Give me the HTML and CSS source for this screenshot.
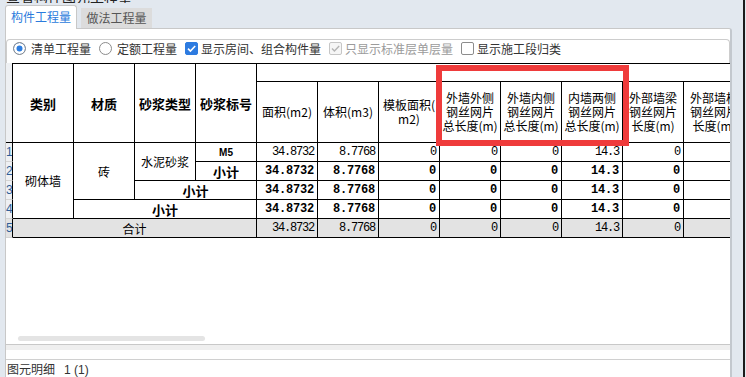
FILE: index.html
```html
<!DOCTYPE html>
<html lang="zh-CN">
<head>
    <meta charset="UTF-8">
    <meta name="viewport" content="width=device-width, initial-scale=1.0">
    <title>查看工程量</title>

    <link rel="stylesheet" href="styles.css">

</head>
<body>

    <div class="app">
        <div class="main">
            <div class="title"><span>查看构件图元工程量</span></div>

            <div class="tabs">
                <div class="tab active">构件工程量</div>
                <div class="tab">做法工程量</div>
            </div>

            <div class="panel">
                <div class="options">
                    <label class="opt"><span class="radio on"></span>清单工程量</label>
                    <label class="opt"><span class="radio"></span>定额工程量</label>
                    <label class="opt">
                        <span class="check on">
                            <svg width="11" height="11" viewBox="0 0 11 11"><path d="M2 5.6l2.4 2.4L9.2 3" fill="none" stroke="#fff" stroke-width="1.6"/></svg>
                        </span>显示房间、组合构件量
                    </label>
                    <label class="opt dim">
                        <span class="check off">
                            <svg width="11" height="11" viewBox="0 0 11 11"><path d="M2 5.6l2.4 2.4L9.2 3" fill="none" stroke="#b4b4b4" stroke-width="1.4"/></svg>
                        </span>只显示标准层单层量
                    </label>
                    <label class="opt"><span class="check"></span>显示施工段归类</label>
                </div>

                <div class="sheet">
                    <div class="grid">
                        <!-- header -->
                        <div class="rn hd-rn r2"></div>
                        <div class="hd big r2">类别</div>
                        <div class="hd big r2">材质</div>
                        <div class="hd big r2">砂浆类型</div>
                        <div class="hd big r2">砂浆标号</div>
                        <div class="hd c8"></div>

                        <div class="sub">面积(m2)</div>
                        <div class="sub">体积(m3)</div>
                        <div class="sub">模板面积(<br>m2)</div>
                        <div class="sub">外墙外侧<br>钢丝网片<br>总长度(m)</div>
                        <div class="sub">外墙内侧<br>钢丝网片<br>总长度(m)</div>
                        <div class="sub">内墙两侧<br>钢丝网片<br>总长度(m)</div>
                        <div class="sub">外部墙梁<br>钢丝网片<br>长度(m)</div>
                        <div class="sub">外部墙柱<br>钢丝网片<br>长度(m)</div>

                        <!-- row 1 -->
                        <div class="rn">1</div>
                        <div class="r4">砌体墙</div>
                        <div class="r3">砖</div>
                        <div class="r2">水泥砂浆</div>
                        <div class="grade">M5</div>
                        <div class="num">34.8732</div>
                        <div class="num">8.7768</div>
                        <div class="num">0</div>
                        <div class="num">0</div>
                        <div class="num">0</div>
                        <div class="num">14.3</div>
                        <div class="num">0</div>
                        <div class="num"></div>

                        <!-- row 2 -->
                        <div class="rn">2</div>
                        <div class="total">小计</div>
                        <div class="num bold">34.8732</div>
                        <div class="num bold">8.7768</div>
                        <div class="num bold">0</div>
                        <div class="num bold">0</div>
                        <div class="num bold">0</div>
                        <div class="num bold">14.3</div>
                        <div class="num bold">0</div>
                        <div class="num bold"></div>

                        <!-- row 3 -->
                        <div class="rn">3</div>
                        <div class="total c2">小计</div>
                        <div class="num bold">34.8732</div>
                        <div class="num bold">8.7768</div>
                        <div class="num bold">0</div>
                        <div class="num bold">0</div>
                        <div class="num bold">0</div>
                        <div class="num bold">14.3</div>
                        <div class="num bold">0</div>
                        <div class="num bold"></div>

                        <!-- row 4 -->
                        <div class="rn">4</div>
                        <div class="total c3">小计</div>
                        <div class="num bold">34.8732</div>
                        <div class="num bold">8.7768</div>
                        <div class="num bold">0</div>
                        <div class="num bold">0</div>
                        <div class="num bold">0</div>
                        <div class="num bold">14.3</div>
                        <div class="num bold">0</div>
                        <div class="num bold"></div>

                        <!-- row 5 -->
                        <div class="rn sum">5</div>
                        <div class="c4 sum">合计</div>
                        <div class="num sum">34.8732</div>
                        <div class="num sum">8.7768</div>
                        <div class="num sum">0</div>
                        <div class="num sum">0</div>
                        <div class="num sum">0</div>
                        <div class="num sum">14.3</div>
                        <div class="num sum">0</div>
                        <div class="num sum"></div>
                    </div>

                    <div class="mark"></div>
                    <div class="thumb"></div>
                </div>

                <div class="splitter"></div>
                <div class="detail">图元明细<span class="count">1 (1)</span></div>
            </div>
        </div>
        <div class="edge"></div>
    </div>

</body>
</html>
```

FILE: styles.css
```css
*{
    margin: 0;padding: 0
}

body{
    background: #e2e8ef;
    font-family: "Noto Sans CJK SC", sans-serif;
    font-size: 12px;
    color: #333;
}

.app{
    display: flex;
    height: 377px;
    overflow: hidden;
}

.main{
    width: 743px;
    flex: none;
}

.edge{
    width: 2px;
    background: #1b1b1b;
}

/* cut off window title */
.title{
    height: 3px;
    overflow: hidden;
    padding-left: 6px;
}

.title span{
    display: block;
    font-size: 14px;
    line-height: 16px;
    margin-top: -12px;
    color: #222;
}

.tabs{
    display: flex;
    align-items: flex-end;
    height: 23px;
    margin-top: 2px;
    padding-left: 5px;
}

.tab{
    width: 71px;
    height: 20px;
    line-height: 20px;
    text-align: center;
    background: #dcdcdc;
    color: #555;
    margin-left: 4px;
}

.tab.active{
    width: 72px;
    height: 24px;
    line-height: 22px;
    box-sizing: border-box;
    background: #fff;
    color: #2b7bdc;
    border: 1px solid #c8c8c8;
    border-bottom: none;
    border-radius: 3px 3px 0 0;
    margin: 0 0 -1px 0;
    position: relative;
    z-index: 1;
}

.panel{
    margin-left: 5px;
    width: 727px;
    height: 349px;
    box-sizing: border-box;
    background: #fff;
    border: 1px solid #c8c8c8;
    border-right: 2px solid #c3c8ce;
    border-bottom: none;
    border-radius: 0 3px 0 0;
}

.options{
    margin-top: 10px;
    height: 24px;
    box-sizing: border-box;
    border: 1px solid #cdcdcd;
    border-bottom: none;
    border-radius: 4px 4px 0 0;
    display: flex;
    align-items: center;
    padding: 0 0 6px 6px;
}

.opt{
    display: flex;
    align-items: center;
    margin-right: 8px;
    white-space: nowrap;
}

.opt.dim{
    color: #9b9b9b;
}

.radio{
    width: 13px;height: 13px;
    box-sizing: border-box;
    border: 1px solid #8c8c8c;
    border-radius: 50%;
    margin-right: 5px;
}

.radio.on{
    background: #2e7ee0;
    box-shadow: inset 0 0 0 2.5px #fff;
}

.check{
    width: 13px;height: 13px;
    box-sizing: border-box;
    border: 1px solid #8c8c8c;
    border-radius: 2px;
    margin-right: 3px;
    display: flex;
    align-items: center;
    justify-content: center;
}

.check.on{
    background: #2d7be0;
    border-color: #2d7be0;
}

.check.off{
    background: #f6f6f6;
    border-color: #c6c6c6;
}

/* quantity sheet */
.sheet{
    position: relative;
    height: 281px;
    display: flex;
    flex-direction: column;
    overflow: hidden;
}

.grid{
    display: grid;
    grid-template-columns: 7px repeat(12, 61px);
    grid-template-rows: 19px 61px repeat(5, 19px);
    width: 739px;
    flex: none;
    color: #000;
}

.grid > div{
    box-sizing: border-box;
    border-right: 1px solid #000;
    border-bottom: 1px solid #000;
    display: flex;
    align-items: center;
    justify-content: center;
    text-align: center;
    white-space: nowrap;
    overflow: hidden;
}

.grid .hd{
    border-top: 1px solid #000;
}

.grid .big{
    font-size: 13px;
    font-weight: bold;
}

.grid .sub{
    line-height: 14px;
}

.grid .rn{
    justify-content: flex-start;
    background: #eef0f3;
    color: #2f5e98;
    font-family: "Liberation Sans", sans-serif;
    border-bottom-color: #d4d4d4;
}

.grid .hd-rn{
    border-bottom-color: #000;
}

.r2{ grid-row: span 2 }
.r3{ grid-row: span 3 }
.r4{ grid-row: span 4 }
.c2{ grid-column: span 2 }
.c3{ grid-column: span 3 }
.c4{ grid-column: span 4 }
.c8{ grid-column: span 8 }

.grid .grade{
    font-family: "Liberation Sans", sans-serif;
    font-size: 10px;
    font-weight: bold;
}

.grid .total{
    font-size: 13px;
    font-weight: bold;
}

.grid .num{
    justify-content: flex-end;
    padding-right: 3px;
    font-family: "Liberation Mono", monospace;
    letter-spacing: -1.2px;
}

.grid .num.bold{
    font-weight: bold;
    letter-spacing: -0.2px;
}

.grid .sum{
    background: #e3e3e3;
}

/* red annotation box */
.mark{
    position: absolute;
    left: 430px;
    top: 2px;
    width: 193px;
    height: 81px;
    box-sizing: border-box;
    border: 6px solid #ef3b3b;
}

.thumb{
    margin: auto 0 3px 12px;
    width: 187px;
    height: 5px;
    border-radius: 3px;
    background: #e4e4e4;
}

.splitter{
    height: 5px;
    border-top: 1px solid #c8c8c8;
    background: #efefef;
}

.detail{
    margin-top: 9px;
    border-top: 1px solid #d0d0d0;
    padding-left: 1px;
    line-height: 17px;
    color: #333;
}

.count{
    margin-left: 9px;
    font-family: "Liberation Sans", sans-serif;
}
```
